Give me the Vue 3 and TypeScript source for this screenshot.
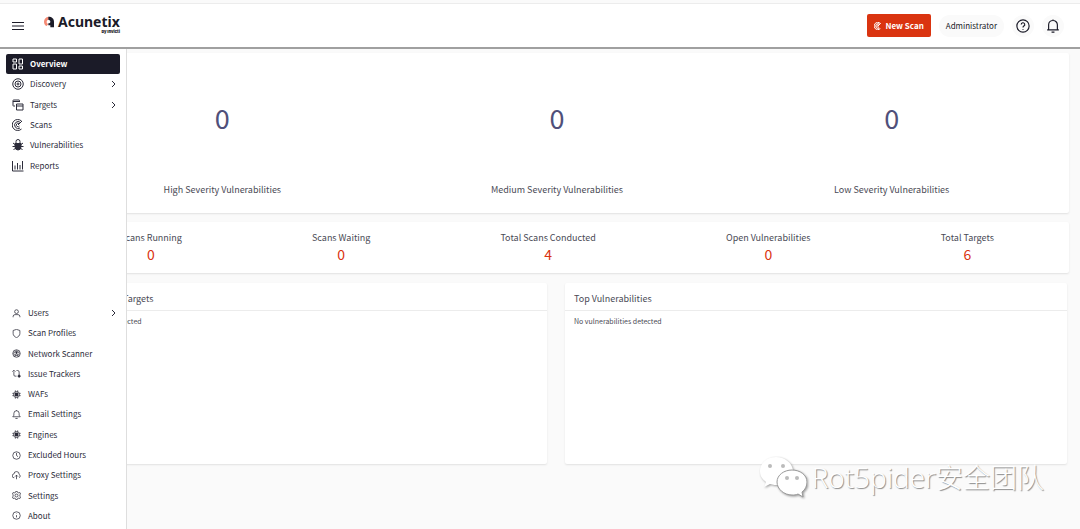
<script setup lang="ts">
interface Shape {
  d: string
  solid?: boolean
}
interface NavItem {
  label: string
  icon: string
  active?: boolean
  expandable?: boolean
}

const ring = (cx: number, cy: number, r: number): string =>
  `M${cx - r} ${cy}a${r} ${r} 0 1 0 ${2 * r} 0a${r} ${r} 0 1 0 ${-2 * r} 0z`

const chip: Shape[] = [
  { d: ring(12, 12, 8) },
  { d: 'M8 8h8v8H8z', solid: true },
  { d: 'M9 1v4M15 1v4M9 19v4M15 19v4M1 9h4M1 15h4M19 9h4M19 15h4' },
]
const bell: Shape[] = [{ d: 'M2 18h20l-3-4V9a7 7 0 0 0-14 0v5z' }, { d: 'M9 22.500h6M12 0v2' }]

const icons: Record<string, Shape[]> = {
  overview: [
    { d: 'M2 2h7v6H2zM2 12h7v10H2zM14 2h7v10h-7zM14 16h7v6h-7z' },
  ],
  discovery: [{ d: ring(12, 12, 10.500) }, { d: ring(12, 12, 6) }, { d: ring(12, 12, 2) }],
  targets: [
    { d: 'M6 14H3a1 1 0 0 1-1-1V3a1 1 0 0 1 1-1h11a1 1 0 0 1 1 1v3M2 5h13' },
    { d: 'M9 10h13v12H9zM9 14h13' },
  ],
  scan: [
    { d: 'M19 4a11 11 0 1 0 0 16' },
    { d: 'M17 7a7 7 0 1 0-1 11' },
    { d: 'M14 9a3.500 3.500 0 1 0 1 5M12 12l8-8' },
  ],
  bug: [
    { d: 'M6 9h12v6a6 7 0 0 1-12 0z', solid: true },
    { d: 'M8 8V5a4 4 0 0 1 8 0v3M6 11L2 8M18 11l4-3M6 15H1M18 15h5M7 18l-4 4M17 18l4 4' },
  ],
  reports: [{ d: 'M1 2v20h22M6 19v-8M11 19V6M16 19v-9M21 19V2' }],
  user: [{ d: ring(12, 7, 5) }, { d: 'M3 22v-3a5 5 0 0 1 5-4h8a5 5 0 0 1 5 4v3' }],
  shield: [{ d: 'M12 1l9 3v8c0 5-4 9-9 11c-5-2-9-6-9-11V4z' }],
  network: [
    { d: ring(12, 12, 10) },
    { d: 'M7 17a7 7 0 1 1 10 0M12 10l-5 11M12 10l5 11M9 17h6' },
    { d: ring(12, 9, 2), solid: true },
  ],
  tracker: [
    { d: 'M5 6v10a3 3 0 0 0 3 3h4M1 7l4-4l4 4M12 4h3a4 4 0 0 1 4 4v9' },
    { d: ring(19, 19, 3), solid: true },
  ],
  chip,
  bell,
  clock: [{ d: ring(12, 12, 10) }, { d: 'M12 5v7l4 3' }],
  cloud: [{ d: 'M6 18a5 5 0 0 1-1-10a7 7 0 0 1 14 1a5 5 0 0 1 0 9M12 22V11M8 15l4-4l4 4' }],
  gear: [
    {
      d: 'M10 1h4l1 3l3 1l3-1l2 4l-2 2v4l2 2l-2 4l-3-1l-3 1l-1 3h-4l-1-3l-3-1l-3 1l-2-4l2-2v-4L1 8l2-4l3 1l3-1z',
    },
    { d: ring(12, 12, 4) },
  ],
  info: [{ d: ring(12, 12, 10) }, { d: 'M12 11v6M12 7v1' }],
}

const primaryNav: NavItem[] = [
  { label: 'Overview', icon: 'overview', active: true },
  { label: 'Discovery', icon: 'discovery', expandable: true },
  { label: 'Targets', icon: 'targets', expandable: true },
  { label: 'Scans', icon: 'scan' },
  { label: 'Vulnerabilities', icon: 'bug' },
  { label: 'Reports', icon: 'reports' },
]
const secondaryNav: NavItem[] = [
  { label: 'Users', icon: 'user', expandable: true },
  { label: 'Scan Profiles', icon: 'shield' },
  { label: 'Network Scanner', icon: 'network' },
  { label: 'Issue Trackers', icon: 'tracker' },
  { label: 'WAFs', icon: 'chip' },
  { label: 'Email Settings', icon: 'bell' },
  { label: 'Engines', icon: 'chip' },
  { label: 'Excluded Hours', icon: 'clock' },
  { label: 'Proxy Settings', icon: 'cloud' },
  { label: 'Settings', icon: 'gear' },
  { label: 'About', icon: 'info' },
]
const navGroups = [
  { name: 'primary', label: 'Main', items: primaryNav },
  { name: 'secondary', label: 'Administration', items: secondaryNav },
]

const severities = [
  { label: 'High Severity Vulnerabilities', count: 0 },
  { label: 'Medium Severity Vulnerabilities', count: 0 },
  { label: 'Low Severity Vulnerabilities', count: 0 },
]
const stats = [
  { label: 'Scans Running', count: 0 },
  { label: 'Scans Waiting', count: 0 },
  { label: 'Total Scans Conducted', count: 4 },
  { label: 'Open Vulnerabilities', count: 0 },
  { label: 'Total Targets', count: 6 },
]
const panels = [
  { title: 'Most Vulnerable Targets', empty: 'No vulnerabilities detected' },
  { title: 'Top Vulnerabilities', empty: 'No vulnerabilities detected' },
]
</script>

<template>
  <div class="app">
    <header class="topbar">
      <button class="plain menu" aria-label="Toggle menu">
        <svg viewBox="0 0 12 10"><path d="M0 1.500h12M0 5h12M0 8.500h12" /></svg>
      </button>
      <a class="brand" href="#">
        <svg class="mark" viewBox="0 0 30 34">
          <path
            d="M14 1C5 2 0 8 0 16c0 6 3 11 8 13l5-6c-3-1-5-3-5-6c0-4 2-6 6-7z"
            fill="#f58a74"
          />
          <path
            d="M13 1c11 0 17 6 17 15v17H19v-6h-6v-6c4 0 6-1 6-5c0-3-2-6-6-6z"
            fill="#1b1b28"
          />
        </svg>
        <span class="wordmark">
          <strong>Acunetix</strong>
          <small>by Invicti</small>
        </span>
      </a>
      <div class="actions">
        <button class="new-scan">
          <svg class="icon" viewBox="0 0 24 24">
            <path v-for="(s, i) in icons.scan" :key="i" :d="s.d" />
          </svg>
          New Scan
        </button>
        <button class="pill">Administrator</button>
        <button class="round" aria-label="Help">
          <svg viewBox="0 0 24 24">
            <circle cx="12" cy="12" r="10.500" />
            <path d="M9 9.500a3 3 0 1 1 4.500 2.500c-1 .6-1.500 1-1.500 2.500M12 17v1.500" />
          </svg>
        </button>
        <button class="round" aria-label="Notifications">
          <svg viewBox="0 0 24 24">
            <path d="M2 18.500h20M4.500 18V10a7.500 7.500 0 0 1 15 0v8M12 1v2M9.500 22.500h5" />
          </svg>
        </button>
      </div>
    </header>

    <div class="body">
      <main class="content">
        <section class="card severities">
          <div v-for="s in severities" :key="s.label" class="severity">
            <div class="big">{{ s.count }}</div>
            <div class="label">{{ s.label }}</div>
          </div>
        </section>
        <section class="card stats">
          <div v-for="s in stats" :key="s.label" class="stat">
            <div class="label">{{ s.label }}</div>
            <div class="value">{{ s.count }}</div>
          </div>
        </section>
        <div class="panels">
          <section v-for="p in panels" :key="p.title" class="card panel">
            <h2>{{ p.title }}</h2>
            <p>{{ p.empty }}</p>
          </section>
        </div>
      </main>

      <aside class="sidebar">
        <nav v-for="g in navGroups" :key="g.name" :class="g.name" :aria-label="g.label">
          <a
            v-for="item in g.items"
            :key="item.label"
            href="#"
            class="item"
            :class="{ active: item.active }"
          >
            <svg class="icon" viewBox="0 0 24 24">
              <path
                v-for="(s, i) in icons[item.icon]"
                :key="i"
                :d="s.d"
                :class="{ solid: s.solid }"
              />
            </svg>
            <span>{{ item.label }}</span>
            <svg v-if="item.expandable" class="chevron" viewBox="0 0 8 8">
              <path d="M3 1l3 3l-3 3" />
            </svg>
          </a>
        </nav>
      </aside>
    </div>

    <div class="watermark">
      <svg viewBox="0 0 48 42">
        <path
          d="M17 1C8 1 1 7 1 15c0 5 2 8 6 11l-2 5l6-3c3 1 6 1 9 1c-2-8 5-15 14-15C33 7 26 1 17 1z"
        />
        <path
          class="front"
          d="M33 14c-8 0-15 5-15 12s7 13 15 13c2 0 4 0 6-1l5 3l-1-5c3-2 5-6 5-10c0-7-7-12-15-12z"
        />
        <circle cx="11" cy="10" r="2" />
        <circle cx="24" cy="10" r="2" />
        <circle cx="28" cy="22" r="2" />
        <circle cx="38" cy="22" r="2" />
      </svg>
      <span><span class="latin">Rot5pider</span>安全团队</span>
    </div>
  </div>
</template>

<style>
body {
  margin: 0;
  background: #fafafa;
}
</style>

<style scoped>
.app {
  position: relative;
  display: flex;
  flex-direction: column;
  min-height: 100vh;
  box-sizing: border-box;
  padding-top: 3px;
  overflow: hidden;
  background: #fafafa;
  color: #4a4a55;
  font-family: 'Noto Sans CJK SC', 'Noto Sans', sans-serif;
  font-size: 8px;
  line-height: 14px;
}
svg {
  display: block;
  flex: none;
  fill: none;
  stroke: currentColor;
}
a {
  color: inherit;
  text-decoration: none;
}
button {
  display: flex;
  align-items: center;
  justify-content: center;
  margin: 0;
  padding: 0;
  border: 0;
  font: inherit;
  color: inherit;
}
.topbar {
  display: flex;
  align-items: center;
  height: 43px;
  padding: 0 16px 0 12px;
  border-top: 1px solid #ececec;
  border-bottom: 2px solid #a0a0a0;
  background: #fff;
  color: #1b1b28;
}
.plain {
  background: none;
}
.menu svg {
  width: 12px;
  height: 10px;
}
.brand {
  display: flex;
  gap: 4px;
  margin-left: 20px;
}
.mark {
  width: 10px;
  height: 12px;
  stroke: none;
}
.wordmark {
  display: flex;
  flex-direction: column;
}
.wordmark strong {
  font-family: 'Noto Sans', sans-serif;
  font-size: 14px;
  line-height: 12px;
}
.wordmark small {
  align-self: flex-end;
  font-family: Inter, 'Noto Sans', sans-serif;
  font-size: 4px;
  font-weight: 900;
  line-height: 7px;
}
.actions {
  display: flex;
  align-items: center;
  gap: 8px;
  margin-left: auto;
}
.new-scan {
  gap: 3px;
  height: 23px;
  padding: 0 7px;
  border-radius: 2px;
  background: #da3410;
  color: #fff;
  font-weight: 700;
}
.new-scan .icon {
  width: 8px;
  height: 8px;
  stroke-width: 3;
}
.pill {
  height: 22px;
  padding: 0 7px;
  border-radius: 11px;
  background: #fafafa;
}
.round {
  width: 22px;
  height: 22px;
  border-radius: 11px;
  background: #fafafa;
}
.round svg {
  width: 14px;
  height: 14px;
  stroke-width: 2;
}
.body {
  position: relative;
  flex: 1;
}
.sidebar {
  position: absolute;
  top: 0;
  bottom: 0;
  left: 0;
  display: flex;
  flex-direction: column;
  justify-content: space-between;
  width: 127px;
  box-sizing: border-box;
  padding: 5px 6px 3px 6px;
  border-right: 1px solid #dedede;
  background: #fff;
  color: #2c2c3a;
}
.sidebar nav {
  display: grid;
  grid-auto-rows: 1fr;
}
.primary {
  height: 122px;
}
.secondary {
  height: 223px;
}
.item {
  display: flex;
  align-items: center;
  gap: 6px;
  padding: 0 3px 0 6px;
  border-radius: 2px;
}
.item.active {
  background: #1b1b28;
  color: #fff;
  font-weight: 700;
}
.item .icon {
  width: 12px;
  height: 12px;
  stroke-width: 2;
}
.secondary .icon {
  width: 9px;
  height: 9px;
}
.item .solid {
  fill: currentColor;
}
.secondary .item {
  gap: 7px;
}
.chevron {
  width: 8px;
  height: 8px;
  margin-left: auto;
}
.content {
  display: flex;
  flex-direction: column;
  gap: 9px;
  padding: 4px 11px 0 45px;
}
.card {
  border-radius: 2px;
  background: #fff;
  box-shadow: 0 1px 2px rgba(0, 0, 0, 0.1);
}
.label {
  font-size: 9px;
}
.severities {
  display: grid;
  grid-template-columns: repeat(3, 1fr);
  padding: 45px 10px 16px;
  text-align: center;
}
.big {
  margin-bottom: 45px;
  color: #50507a;
  font-size: 27px;
  line-height: 40px;
}
.stats {
  display: flex;
  justify-content: space-around;
  padding: 9px 10px 10px;
  text-align: center;
}
.value {
  color: #da3410;
  font-size: 14px;
  line-height: 18px;
}
.panels {
  display: grid;
  grid-template-columns: 1fr 1fr;
  gap: 18px;
  padding: 1px 2px 0 0;
}
.panel {
  min-height: 181px;
}
.panel h2 {
  margin: 0;
  padding: 9px 9px 4px;
  border-bottom: 1px solid #ececec;
  font-size: 9px;
  font-weight: 400;
  line-height: 14px;
}
.panel p {
  margin: 0;
  padding: 3px 9px;
  font-size: 7px;
}
.watermark {
  position: absolute;
  right: 36px;
  bottom: 31px;
  display: flex;
  align-items: center;
  gap: 5px;
  color: #fff;
  font-family: 'Open Sans', 'Noto Sans CJK SC', sans-serif;
  font-size: 27px;
  font-weight: 300;
  line-height: 40px;
  text-shadow: 1px 1px 1px #888;
}
.latin {
  font-size: 28px;
}
.watermark svg {
  width: 48px;
  height: 42px;
  fill: #fff;
  stroke: none;
  filter: drop-shadow(1px 1px 1px #999);
}
.watermark .front {
  stroke: #999;
}
.watermark circle {
  fill: #bbb;
}
</style>
